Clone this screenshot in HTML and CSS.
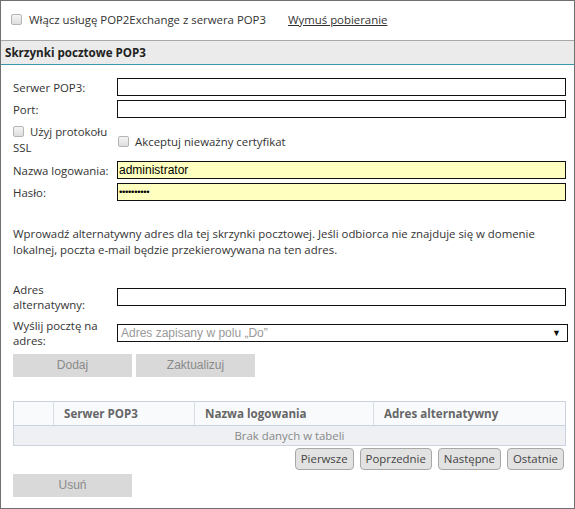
FILE: index.html
```html
<!DOCTYPE html>
<html lang="pl">
<head>
<meta charset="utf-8">
<link rel="stylesheet" href="styles.css">
</head>
<body>
<div class="frame">
  <div class="topbar">
    <label class="chk-label"><span class="chk"></span>Włącz usługę POP2Exchange z serwera POP3</label>
    <a class="link" href="#">Wymuś pobieranie</a>
  </div>
  <div class="section-head">Skrzynki pocztowe POP3</div>
  <div class="form">
    <div class="row">
      <div class="lbl">Serwer POP3:</div>
      <div class="field"><div class="input"></div></div>
    </div>
    <div class="row">
      <div class="lbl">Port:</div>
      <div class="field"><div class="input"></div></div>
    </div>
    <div class="row ssl-row">
      <div class="lbl ssl"><span class="chk"></span> Użyj protokołu SSL</div>
      <div class="field"><label class="chk-label"><span class="chk"></span>Akceptuj nieważny certyfikat</label></div>
    </div>
    <div class="row">
      <div class="lbl">Nazwa logowania:</div>
      <div class="field"><div class="input yellow">administrator</div></div>
    </div>
    <div class="row">
      <div class="lbl">Hasło:</div>
      <div class="field"><div class="input yellow pwd">••••••••••</div></div>
    </div>
    <p class="note">Wprowadź alternatywny adres dla tej skrzynki pocztowej. Jeśli odbiorca nie znajduje się w domenie lokalnej, poczta e-mail będzie przekierowywana na ten adres.</p>
    <div class="row two">
      <div class="lbl">Adres alternatywny:</div>
      <div class="field"><div class="input"></div></div>
    </div>
    <div class="row two">
      <div class="lbl">Wyślij pocztę na adres:</div>
      <div class="field"><div class="input select"><span>Adres zapisany w polu „Do”</span><span class="arrow">▼</span></div></div>
    </div>
    <div class="btns">
      <div class="btn">Dodaj</div>
      <div class="btn">Zaktualizuj</div>
    </div>
    <table class="grid">
      <thead>
        <tr><th class="c0"></th><th class="c1">Serwer POP3</th><th class="c2">Nazwa logowania</th><th class="c3">Adres alternatywny</th></tr>
      </thead>
      <tbody>
        <tr><td colspan="4" class="empty">Brak danych w tabeli</td></tr>
      </tbody>
    </table>
    <div class="pager">
      <div class="pbtn">Pierwsze</div>
      <div class="pbtn">Poprzednie</div>
      <div class="pbtn">Następne</div>
      <div class="pbtn">Ostatnie</div>
    </div>
    <div class="btn del">Usuń</div>
  </div>
</div>
</body>
</html>
```
FILE: styles.css
```css
html, body {
  margin: 0;
  padding: 0;
  background: #fff;
}
body {
  font-family: "Open Sans", "Noto Sans", sans-serif;
  font-size: 11.4px;
  color: #333;
}
.frame {
  width: 575px;
  height: 509px;
  box-sizing: border-box;
  border: 1px solid #707070;
  overflow: hidden;
}
.topbar {
  height: 39px;
  display: flex;
  align-items: center;
  padding-left: 10px;
  box-sizing: border-box;
  padding-bottom: 3px;
}
.chk-label {
  display: flex;
  align-items: center;
}
.chk {
  display: inline-block;
  width: 11px;
  height: 11px;
  box-sizing: border-box;
  border: 1px solid #b5b5b5;
  border-radius: 2px;
  background: linear-gradient(#f4f4f4, #dedede);
  margin-right: 7px;
  vertical-align: -1px;
}
.link {
  color: #333;
  text-decoration: underline;
  margin-left: 22px;
}
.section-head {
  border-top: 1px solid #a8a8a8;
  border-bottom: 1px solid #3a95ad;
  background: #ebebeb;
  height: 23px;
  line-height: 23px;
  padding-left: 4px;
  font-weight: bold;
  font-size: 11.6px;
  color: #222;
}
.form {
  padding: 13px 8px 0 12px;
}
.row {
  display: grid;
  grid-template-columns: 104px 1fr;
  align-items: center;
  margin-bottom: 4px;
}
.lbl {
  line-height: 15px;
  padding-right: 3px;
}
.input {
  height: 18px;
  box-sizing: border-box;
  border: 1px solid #111;
  background: #fff;
  font-family: "Liberation Sans", Arial, sans-serif;
  font-size: 12px;
  line-height: 16px;
  padding-left: 1px;
  color: #000;
}
.yellow {
  background: #ffffc0;
}
.pwd {
  font-size: 9.5px;
  letter-spacing: -0.3px;
}
.ssl-row {
  margin: 6px 0 5px;
}
.ssl {
  line-height: 16px;
}
.ssl .chk {
  margin-right: 3px;
}
.ssl-row .chk-label {
  margin-top: 2px;
}
.ssl-row .chk-label .chk {
  margin-left: 1px;
  margin-right: 6px;
}
.note {
  margin: 25px 0 24px;
  line-height: 16px;
  padding-right: 4px;
}
.row.two {
  margin-bottom: 6px;
}
.select {
  display: flex;
  justify-content: space-between;
  align-items: center;
  color: #999;
  padding: 0 6px 0 3px;
  margin-right: -2px;
}
.arrow {
  color: #111;
  font-size: 9px;
}
.btns {
  display: flex;
  gap: 4px;
  margin-top: 2px;
}
.btn {
  width: 119px;
  height: 23px;
  line-height: 23px;
  text-align: center;
  background: #d9d9d9;
  color: #8a8a8a;
  font-family: "Liberation Sans", Arial, sans-serif;
  font-size: 12px;
}
.grid {
  margin-top: 24px;
  width: 553px;
  border-collapse: collapse;
  border: 1px solid #c9d2de;
}
.grid th {
  height: 23px;
  background: #f9fafc;
  border-right: 1px solid #d8dde6;
  border-bottom: 1px solid #c9d2de;
  text-align: left;
  padding: 0 0 0 10px;
  color: #666;
  font-weight: bold;
  font-size: 11.6px;
}
.grid th:last-child {
  border-right: none;
}
.c0 { width: 29px; }
.c1 { width: 130px; }
.c2 { width: 168px; }
.grid td.empty {
  height: 19px;
  padding: 0;
  background: #eef0f4;
  text-align: center;
  color: #888;
}
.pager {
  display: flex;
  justify-content: flex-end;
  gap: 6px;
  margin-top: 2px;
  padding-right: 2px;
}
.pbtn {
  height: 22px;
  box-sizing: border-box;
  line-height: 20px;
  padding: 0 5px;
  border: 1px solid #a8a8a8;
  border-radius: 4px;
  background: #e2e2e2;
  color: #444;
}
.del {
  margin-top: 4px;
}
```
